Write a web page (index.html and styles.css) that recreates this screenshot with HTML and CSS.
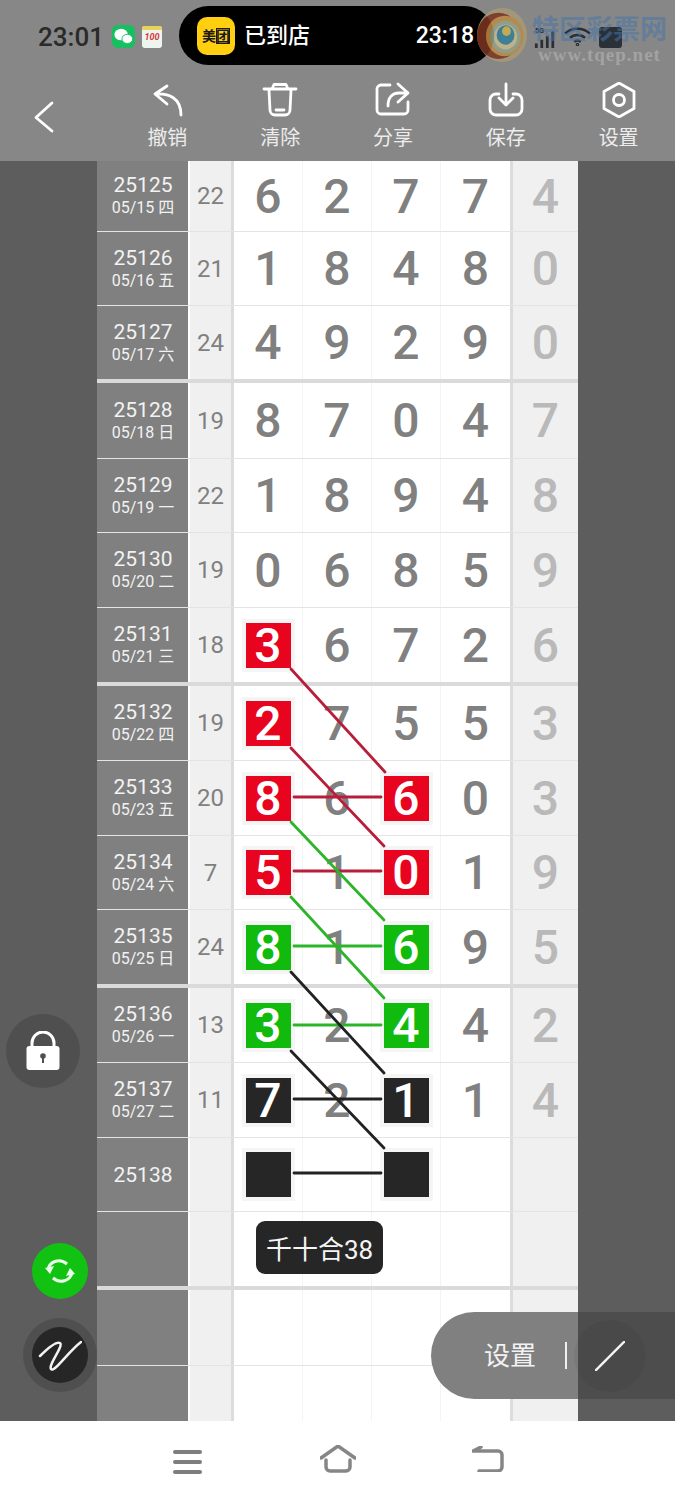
FILE: index.html
```html
<!DOCTYPE html>
<html lang="zh">
<head>
<meta charset="utf-8">
<title>走势图</title>
<link rel="stylesheet" href="styles.css">
</head>
<body>
<div class="phone">
  <header class="top">
    <div class="status">
      <span class="clock">23:01</span>
      <svg class="app-wechat" viewBox="0 0 24 24"><rect width="24" height="24" rx="6" fill="#16c060"/><ellipse cx="9.5" cy="10" rx="7" ry="6" fill="#fff"/><ellipse cx="16" cy="14.5" rx="5.6" ry="4.8" fill="#fff" stroke="#16c060"/></svg>
      <span class="app-note"><span class="note-band"></span><span class="note-text">100</span></span>
      <div class="capsule">
        <span class="mt-logo"><span>美</span><span class="mt-box">团</span></span>
        <span class="cap-title">已到店</span>
        <span class="cap-time">23:18</span>
      </div>
      <div class="sys">
        <svg class="sys-signal" viewBox="0 0 24 24"><text class="sig-text" x="1" y="8">5G</text><g fill="#2b2f35"><rect x="1" y="19" width="3" height="5"/><rect x="7" y="15" width="3" height="9"/><rect x="13" y="11" width="3" height="13"/><rect x="19" y="6" width="3" height="18"/></g></svg>
        <svg class="sys-wifi" viewBox="0 0 28 20" fill="none" stroke="#2b2f35" stroke-width="2.6"><path d="M1 7C8 0 20 0 27 7"/><path d="M6 11.500C10.500 7.500 17.500 7.500 22 11.500"/><path d="M10.500 15.500C12.500 14 15.500 14 17.500 15.500"/><circle cx="14" cy="18.500" r=".6"/></svg>
        <span class="sys-batt"></span>
      </div>
    </div>
    <nav class="tools">
      <svg class="back" viewBox="0 0 20 32" fill="none"><path d="M18 2L2 16.500L18 30"/></svg>
      <div class="tool">
        <svg viewBox="0 0 36 36" fill="none"><path d="M18 4L6 12L18 22M6 12C20 11 32 16 32 33"/></svg>
        <span>撤销</span>
      </div>
      <div class="tool">
        <svg viewBox="0 0 36 36" fill="none"><path d="M2 7H34M10 7L12 2.500H24L26 7M7 8L8 28A5 5 0 0 0 13 33H23A5 5 0 0 0 28 28L29 8M14 28H22"/></svg>
        <span>清除</span>
      </div>
      <div class="tool">
        <svg viewBox="0 0 36 36" fill="none"><path d="M15 3H6A4 4 0 0 0 2 7V28A4 4 0 0 0 6 32H29A4 4 0 0 0 33 28V20M23 2L33 11L23 20M33 11H24C17 11 13 16 13 24"/></svg>
        <span>分享</span>
      </div>
      <div class="tool">
        <svg viewBox="0 0 36 36" fill="none"><path d="M11 12H8A6 6 0 0 0 2 18V27A6 6 0 0 0 8 33H28A6 6 0 0 0 34 27V18A6 6 0 0 0 28 12H25M18 2V23M11 16L18 23L25 16"/></svg>
        <span>保存</span>
      </div>
      <div class="tool">
        <svg viewBox="0 0 36 36" fill="none"><path d="M18 1L33 9.500V26.500L18 35L3 26.500V9.500Z"/><circle cx="18" cy="18" r="5.500"/></svg>
        <span>设置</span>
      </div>
    </nav>
    <div class="mark">
      <svg class="mark-logo" viewBox="0 0 56 56" preserveAspectRatio="none" fill="none">
        <circle cx="28" cy="28" r="28" fill="#a89a78"/>
        <circle cx="24" cy="29" r="24" fill="#7d3420"/>
        <circle cx="31" cy="29" r="21" fill="#c08a42"/>
        <circle cx="32" cy="30" r="17" fill="#8fa48e"/>
        <circle cx="32" cy="30" r="13" fill="#c9b98a"/>
        <circle cx="32" cy="28" r="10" fill="#2e7f9a"/>
        <circle cx="33" cy="24" r="5" fill="#cdb04a"/>
      </svg>
      <div class="mark-text">
        <span class="mark-name">特区彩票网</span>
        <span class="mark-url">www.tqep.net</span>
      </div>
    </div>
  </header>

  <main class="main">
    <div class="side"></div>
    <div class="sheet">
      <div class="row h71"><div class="issue"><b>25125</b><i>05/15 四</i></div><div class="sum">22</div><div class="c">6</div><div class="c">2</div><div class="c">7</div><div class="c c4">7</div><div class="x">4</div></div>
      <div class="row h74"><div class="issue"><b>25126</b><i>05/16 五</i></div><div class="sum">21</div><div class="c">1</div><div class="c">8</div><div class="c">4</div><div class="c c4">8</div><div class="x">0</div></div>
      <div class="row h77 end"><div class="issue"><b>25127</b><i>05/17 六</i></div><div class="sum">24</div><div class="c">4</div><div class="c">9</div><div class="c">2</div><div class="c c4">9</div><div class="x">0</div></div>
      <div class="row h76"><div class="issue"><b>25128</b><i>05/18 日</i></div><div class="sum">19</div><div class="c">8</div><div class="c">7</div><div class="c">0</div><div class="c c4">4</div><div class="x">7</div></div>
      <div class="row h74"><div class="issue"><b>25129</b><i>05/19 一</i></div><div class="sum">22</div><div class="c">1</div><div class="c">8</div><div class="c">9</div><div class="c c4">4</div><div class="x">8</div></div>
      <div class="row h75"><div class="issue"><b>25130</b><i>05/20 二</i></div><div class="sum">19</div><div class="c">0</div><div class="c">6</div><div class="c">8</div><div class="c c4">5</div><div class="x">9</div></div>
      <div class="row h78 end"><div class="issue"><b>25131</b><i>05/21 三</i></div><div class="sum">18</div><div class="c"><span class="box red">3</span></div><div class="c">6</div><div class="c">7</div><div class="c c4">2</div><div class="x">6</div></div>
      <div class="row h75"><div class="issue"><b>25132</b><i>05/22 四</i></div><div class="sum">19</div><div class="c"><span class="box red">2</span></div><div class="c">7</div><div class="c">5</div><div class="c c4">5</div><div class="x">3</div></div>
      <div class="row h75"><div class="issue"><b>25133</b><i>05/23 五</i></div><div class="sum">20</div><div class="c"><span class="box red">8</span></div><div class="c">6</div><div class="c"><span class="box red">6</span></div><div class="c c4">0</div><div class="x">3</div></div>
      <div class="row h74"><div class="issue"><b>25134</b><i>05/24 六</i></div><div class="sum">7</div><div class="c"><span class="box red">5</span></div><div class="c">1</div><div class="c"><span class="box red">0</span></div><div class="c c4">1</div><div class="x">9</div></div>
      <div class="row h78 end"><div class="issue"><b>25135</b><i>05/25 日</i></div><div class="sum">24</div><div class="c"><span class="box green">8</span></div><div class="c">1</div><div class="c"><span class="box green">6</span></div><div class="c c4">9</div><div class="x">5</div></div>
      <div class="row h75"><div class="issue"><b>25136</b><i>05/26 一</i></div><div class="sum">13</div><div class="c"><span class="box green">3</span></div><div class="c">2</div><div class="c"><span class="box green">4</span></div><div class="c c4">4</div><div class="x">2</div></div>
      <div class="row h75"><div class="issue"><b>25137</b><i>05/27 二</i></div><div class="sum">11</div><div class="c"><span class="box black">7</span></div><div class="c">2</div><div class="c"><span class="box black">1</span></div><div class="c c4">1</div><div class="x">4</div></div>
      <div class="row h74"><div class="issue"><b>25138</b></div><div class="sum"></div><div class="c"><span class="box black"></span></div><div class="c"></div><div class="c"><span class="box black"></span></div><div class="c c4"></div><div class="x"></div></div>
      <div class="row h78 end"><div class="issue"></div><div class="sum"></div><div class="c"></div><div class="c"></div><div class="c"></div><div class="c c4"></div><div class="x"></div></div>
      <div class="row h76"><div class="issue"></div><div class="sum"></div><div class="c"></div><div class="c"></div><div class="c"></div><div class="c c4"></div><div class="x"></div></div>
      <div class="row h55 last"><div class="issue"></div><div class="sum"></div><div class="c"></div><div class="c"></div><div class="c"></div><div class="c c4"></div><div class="x"></div></div>

      <svg class="links" viewBox="0 0 481 1260" fill="none">
        <g class="l-red"><path d="M194 508L288 611"/><path d="M194 587L287 685"/><path d="M197 636H284"/><path d="M197 710H284"/></g>
        <g class="l-green"><path d="M194 661L287 759"/><path d="M194 736L287 837"/><path d="M197 785H284"/><path d="M197 864H284"/></g>
        <g class="l-black"><path d="M194 811L287 912"/><path d="M194 890L287 987"/><path d="M197 938H284"/><path d="M197 1012H284"/></g>
      </svg>
      <div class="tip">千十合38</div>
    </div>
    <div class="side"></div>

    <div class="fab fab-lock">
      <svg viewBox="0 0 34 40"><path d="M6 18V12a11 11 0 0 1 22 0v6" fill="none" stroke="#fff" stroke-width="3"/><rect x="0.500" y="15" width="33" height="24" rx="3" fill="#fff"/><circle cx="17" cy="25" r="2.800" fill="#4f4f4f"/><rect x="16" y="26" width="2" height="6" fill="#4f4f4f"/></svg>
    </div>
    <div class="fab fab-sync">
      <svg viewBox="0 0 32 32" fill="none"><path d="M4 14C6 6 16 3 23 9M28 18C26 26 16 29 9 23"/><path class="fill" d="M1 13L10 11L6 19Z"/><path class="fill" d="M31 19L22 21L26 13Z"/></svg>
    </div>
    <div class="fab fab-pen">
      <svg viewBox="0 0 44 36" fill="none"><path d="M2 19C8 13 18 4 22 6C26 9 10 28 13 32C16 36 30 15 43 5"/></svg>
    </div>
    <div class="pill">
      <span class="pill-label">设置</span>
      <span class="pill-bar"></span>
      <span class="pill-round"><svg viewBox="0 0 32 32" fill="none"><path d="M1 31L31 1"/></svg></span>
    </div>
  </main>

  <footer class="nav">
    <span class="burger"><i></i><i></i><i></i></span>
    <svg class="nav-home" viewBox="0 0 36 28" fill="none"><path d="M1 13L18 1L35 13M6 15V22A4 4 0 0 0 10 26H26A4 4 0 0 0 30 22V15"/></svg>
    <svg class="nav-back" viewBox="0 0 32 26" fill="none"><path d="M1 5H26A4 4 0 0 1 30 9V21A4 4 0 0 1 26 25H7M9 1L1 5"/></svg>
  </footer>
</div>
</body>
</html>
```

FILE: styles.css
```css
* { box-sizing: border-box; }
html, body { margin: 0; padding: 0; }
body { width: 675px; height: 1500px; overflow: hidden; background: #fff; font-family: Roboto, "Noto Sans CJK SC", sans-serif; }
.phone { width: 675px; height: 1500px; display: flex; flex-direction: column; }

/* top */
.top { position: relative; height: 161px; flex: none; background: #878787; }
.status { height: 82px; display: flex; align-items: flex-start; padding-left: 38px; }
.clock { margin-top: 21px; font-size: 26px; font-weight: 500; line-height: 32px; color: #2a2a2a; width: 66px; }
.app-wechat { width: 23px; height: 23px; margin: 25px 0 0 8px; }
.app-note { position: relative; width: 20px; height: 22px; margin: 26px 0 0 7px; border-radius: 3px; background: #eef5ee; overflow: hidden; display: flex; justify-content: center; align-items: center; }
.note-band { position: absolute; left: 0; right: 0; top: 0; height: 4px; background: #e8d35a; }
.note-text { font-size: 9px; font-style: italic; font-weight: 700; color: #d23a3a; }
.capsule { width: 315px; height: 59px; margin: 6px 0 0 17px; border-radius: 30px; background: #000; display: flex; align-items: center; padding: 0 20px 0 18px; color: #fff; }
.mt-logo { width: 38px; height: 38px; border-radius: 10px; background: #ffcf10; color: #1a1a1a; font-size: 14px; font-weight: 700; line-height: 16px; display: flex; align-items: center; justify-content: center; }
.mt-box { outline: 1px solid #1a1a1a; outline-offset: -1px; }
.cap-title { margin-left: 9px; font-size: 22px; line-height: 30px; font-weight: 500; flex: 1; }
.cap-time { font-size: 23px; font-weight: 500; line-height: 30px; }
.sys { display: flex; align-items: flex-start; margin-left: 40px; }
.sys-signal { width: 22px; height: 24px; margin-top: 25px; }
.sig-text { font-size: 8px; font-weight: 700; fill: #2b2f35; }
.sys-wifi { width: 27px; height: 19px; margin: 27px 0 0 8px; stroke: #2b2f35; }
.sys-batt { width: 23px; height: 21px; margin: 27px 0 0 8px; background: #2a3038; border-radius: 3px; }
.tools { height: 79px; display: flex; align-items: flex-start; padding-left: 34px; }
.back { width: 20px; height: 32px; margin-top: 19px; margin-right: 57px; }
.back path, .tool path, .tool circle { stroke: #fff; stroke-width: 2.800px; stroke-linecap: round; stroke-linejoin: round; }
.tool { width: 113px; display: flex; flex-direction: column; align-items: center; color: #ececec; }
.tool svg { width: 36px; height: 36px; }
.tool span { font-size: 20px; line-height: 26px; margin-top: 7px; }
.mark { position: absolute; left: 477px; top: 8px; display: flex; align-items: flex-start; opacity: .85; }
.mark-logo { width: 50px; height: 54px; }
.mark-text { display: flex; flex-direction: column; align-items: center; margin: 6px 0 0 5px; }
.mark-name { font-size: 27px; line-height: 32px; font-weight: 700; color: rgba(72, 118, 170, .65); white-space: nowrap; }
.mark-url { font-family: "Liberation Serif", serif; font-size: 19px; line-height: 18px; letter-spacing: 1px; font-weight: 700; color: #a8a8a8; white-space: nowrap; }

/* main */
.main { position: relative; height: 1260px; flex: none; display: flex; }
.side { width: 97px; flex: none; background: #5d5d5d; }
.sheet { position: relative; width: 481px; flex: none; overflow: hidden; background: #fff; }
.row { display: flex; border-bottom: 1.500px solid #e4e4e4; }
.h71 { height: 71px; } .h74 { height: 74px; } .h75 { height: 75px; } .h76 { height: 76px; }
.h77 { height: 77px; } .h78 { height: 78px; } .h55 { height: 55px; }
.end { border-bottom: 4px solid #dadada; }
.last { border-bottom: 0; }
.issue { width: 91px; flex: none; background: #808080; color: #f2f2f2; display: flex; flex-direction: column; align-items: center; justify-content: center; padding-left: 1px; }
.issue b { font-weight: 400; font-size: 21px; line-height: 24px; }
.issue i { font-style: normal; font-size: 16px; line-height: 22px; }
.sum { width: 46px; flex: none; border-left: 2px solid #fff; border-right: 3px solid #dcdcdc; background: #f0f0f0; color: #808080; font-size: 24px; display: flex; align-items: center; justify-content: center; }
.c { width: 69px; flex: none; background: #fff; border-right: 1.500px solid #f4f4f4; color: #808080; font-size: 48px; font-weight: 500; display: flex; align-items: center; justify-content: center; }
.c4 { width: 72px; border-right: 3px solid #dcdcdc; }
.x { width: 65px; flex: none; background: #f0f0f0; color: #b9b9b9; font-size: 48px; font-weight: 500; display: flex; align-items: center; justify-content: center; }
.box { width: 45px; height: 45px; display: flex; align-items: center; justify-content: center; color: #fff; outline: 4px solid #f5f5f5; }
.red { background: #e8041e; }
.green { background: #10bb0e; }
.black { background: #262626; }
.links { position: absolute; left: 0; top: 0; width: 481px; height: 1260px; }
.links path { stroke-width: 2.800px; stroke-linecap: round; }
.l-red path { stroke: #b81e3a; }
.l-green path { stroke: #2db52a; }
.l-black path { stroke: #222; }
.tip { position: absolute; left: 159px; top: 1060px; width: 127px; height: 53px; border-radius: 9px; background: #262626; color: #f5f5f5; font-size: 26px; display: flex; align-items: center; justify-content: center; white-space: nowrap; }

/* floating */
.fab { position: absolute; border-radius: 50%; display: flex; align-items: center; justify-content: center; }
.fab-lock { left: 6px; top: 853px; width: 74px; height: 74px; background: #4f4f4f; }
.fab-lock svg { width: 34px; height: 40px; }
.fab-sync { left: 32px; top: 1082px; width: 56px; height: 56px; background: #12c212; }
.fab-sync svg { width: 32px; height: 32px; }
.fab-sync path { stroke: #e8ffe8; stroke-width: 3; }
.fab-sync .fill { fill: #e8ffe8; stroke: none; }
.fab-pen { left: 32px; top: 1166px; width: 56px; height: 56px; background: #262626; box-shadow: 0 0 0 9px #4f4f4f; }
.fab-pen svg { width: 44px; height: 36px; }
.fab-pen path { stroke: #f2f2f2; stroke-width: 2.500px; stroke-linecap: round; stroke-linejoin: round; }
.pill { position: absolute; left: 431px; top: 1151px; width: 244px; height: 87px; border-radius: 44px 0 0 44px; background: linear-gradient(90deg, #808080 147px, #4d4d4d 147px); display: flex; align-items: center; color: #f2f2f2; }
.pill-label { margin-left: 53px; font-size: 26px; line-height: 30px; margin-top: 1px; }
.pill-bar { width: 2px; height: 27px; margin-left: 29px; background: #f0f0f0; }
.pill-round { width: 72px; height: 72px; margin-left: 7px; border-radius: 50%; background: rgba(0, 0, 0, .05); display: flex; align-items: center; justify-content: center; }
.pill-round svg { width: 30px; height: 30px; }
.pill-round path { stroke: #f5f5f5; stroke-width: 2.500px; stroke-linecap: round; }

/* nav */
.nav { flex: 1; background: #fff; display: flex; align-items: flex-start; padding-left: 173px; }
.burger { width: 29px; margin-top: 29px; display: flex; flex-direction: column; gap: 6.500px; }
.burger i { height: 3.500px; border-radius: 2px; background: #7e7e7e; }
.nav-home { width: 36px; height: 28px; margin: 24px 0 0 118px; }
.nav-back { width: 32px; height: 26px; margin: 25px 0 0 116px; }
.nav path { stroke: #868686; stroke-width: 3.500px; stroke-linecap: round; stroke-linejoin: round; }
```
